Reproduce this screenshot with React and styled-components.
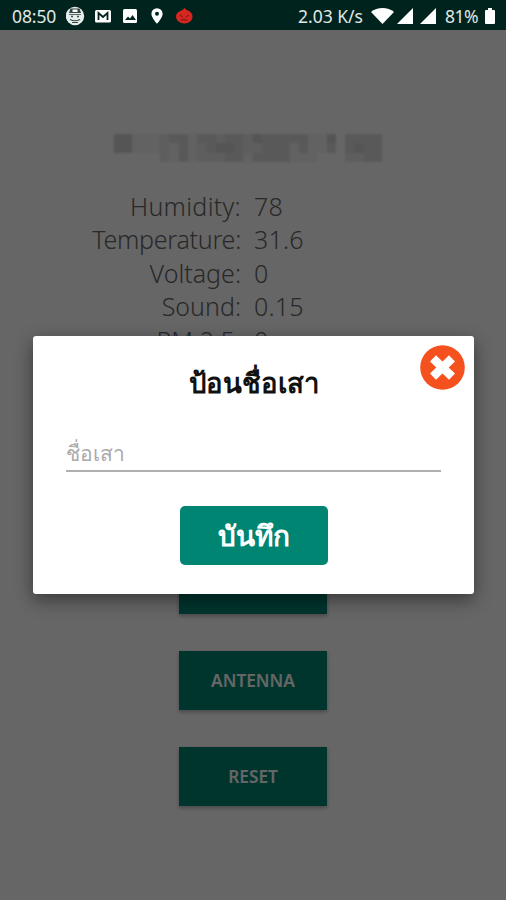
import React from "react";
import styled, { createGlobalStyle } from "styled-components";

const readings = [
  { label: "Humidity:", value: "78", spacing: 0.3 },
  { label: "Temperature:", value: "31.6", spacing: -0.25 },
  { label: "Voltage:", value: "0", spacing: 0 },
  { label: "Sound:", value: "0.15", spacing: 0 },
  { label: "PM 2.5:", value: "0", spacing: 0.1 },
];

// darkness of every tile of the censored title, row by row
const mosaic = [
  "44111233133233243333311403333",
  "44111213123443223331311303433",
  "00000213122233133331110002233",
];

export default function App() {
  return (
    <Screen>
      <GlobalStyle />
      <StatusBar>
        <Clock>08:50</Clock>
        <NotificationIcons />
        <Speed>2.03 K/s</Speed>
        <SignalIcons />
        <Percent>81%</Percent>
        <BatteryIcon />
      </StatusBar>

      <Page>
        <Mosaic>
          {mosaic.join("").split("").map((level, i) => (
            <Tile key={i} $level={Number(level)} />
          ))}
        </Mosaic>
        <Readings>
          {readings.map((el) => (
            <Reading key={el.label}>
              <Label $spacing={el.spacing}>{el.label}</Label>
              <Value>{el.value}</Value>
            </Reading>
          ))}
        </Readings>
        <Actions>
          <PageButton />
          <PageButton>ANTENNA</PageButton>
          <PageButton>RESET</PageButton>
        </Actions>
      </Page>

      <Overlay>
        <Modal>
          <CloseButton aria-label="close">
            <svg width="45" height="45" viewBox="0 0 45 45">
              <circle cx="22.5" cy="22.5" r="22.3" fill="#f4511e" />
              <path
                d="M13 13.300 32 31.700M32 13.300 13 31.700"
                stroke="#fff"
                strokeWidth="8.600"
              />
            </svg>
          </CloseButton>
          <Title>ป้อนชื่อเสา</Title>
          <NameInput placeholder="ชื่อเสา" />
          <SaveButton>บันทึก</SaveButton>
        </Modal>
      </Overlay>
    </Screen>
  );
}

function NotificationIcons() {
  return (
    <Notifications width="130" height="20" viewBox="0 0 130 20">
      <circle cx="9" cy="10" r="9.2" fill="#e6eeec" />
      <path d="M4.500 2.500h9L15 7H3z" fill="#33453f" />
      <path d="M6.500 3.500h5V6h-5z" fill="#fff" />
      <path d="M3 8.500h12" stroke="#5d6b67" strokeWidth="1" />
      <circle cx="6" cy="10.500" r="1" fill="#33453f" />
      <circle cx="12" cy="10.500" r="1" fill="#33453f" />
      <path d="M4 13.500q5 2.500 10 0M6 16.500h6" fill="none" stroke="#33453f" strokeWidth="1.2" />
      <rect x="29" y="4" width="16" height="12.5" rx="1.5" fill="#fff" />
      <path d="M32.500 14V7l4.500 4 4.500-4v7" fill="none" stroke="#01241e" strokeWidth="1.8" />
      <rect x="57" y="3" width="14" height="14" rx="1.5" fill="#fff" />
      <path d="m59 14 3-3.500 2 2 2.500-3.500 3.500 5z" fill="#01241e" />
      <path
        d="M91 2.200a5.600 5.600 0 0 0-5.600 5.600c0 4.200 5.600 10 5.600 10s5.600-5.800 5.600-10A5.600 5.600 0 0 0 91 2.200z"
        fill="#fff"
      />
      <circle cx="91" cy="7.800" r="2" fill="#01241e" />
      <path
        d="M118.500 1.500c.5 2 2.500 2.500 4.500 3.500 2 1.200 3.500 3 3.500 5.500 0 4-3.500 7-8 7s-8.500-3-8.500-7c0-2.500 1.500-4 3.500-5 2-1.200 4-1.500 5-4z"
        fill="#d5261f"
      />
      <path
        d="m114 9 2.500 2m6-2-2.500 2M115 14.500q3-2 6.500 0"
        fill="none"
        stroke="#8b1a16"
        strokeWidth="1.3"
      />
    </Notifications>
  );
}

function SignalIcons() {
  return (
    <Signals width="66" height="18" viewBox="0 0 66 18">
      <path d="M0 5C6-.3 17-.3 23 5L11.500 17z" fill="#fff" />
      <path d="M42 1v16H26zM65 1v16H49z" fill="#fff" />
    </Signals>
  );
}

function BatteryIcon() {
  return (
    <svg width="10" height="16" viewBox="0 0 10 16">
      <path d="M3 0h4v2h2q1 0 1 1v12q0 1-1 1H1q-1 0-1-1V3q0-1 1-1h2z" fill="#fff" />
    </svg>
  );
}

const GlobalStyle = createGlobalStyle`
  * {
    box-sizing: border-box;
  }
  body {
    margin: 0;
    background: #656565;
  }
`;

const Screen = styled.div`
  position: relative;
  width: 506px;
  height: 900px;
  overflow: hidden;
  background: #fff;
  font-family: "Noto Sans", sans-serif;
`;

const StatusBar = styled.header`
  position: relative;
  z-index: 2;
  display: flex;
  align-items: center;
  height: 30px;
  padding: 2px 11px 0 12px;
  background: #00231d;
  color: #e1e8e6;
  font-size: 17.5px;
  line-height: 28px;
  white-space: nowrap;
`;

const Clock = styled.span`
  width: 54px;
  letter-spacing: -0.1px;
`;

const Notifications = styled.svg`
  flex: none;
`;

const Speed = styled.span`
  width: 65px;
  margin-left: auto;
`;

const Signals = styled.svg`
  flex: none;
  margin: 0 8px;
`;

const Percent = styled.span`
  width: 40px;
  letter-spacing: -0.5px;
`;

const Page = styled.main`
  display: flex;
  flex-direction: column;
  align-items: center;
  padding-top: 104px;
`;

const Mosaic = styled.div`
  display: grid;
  grid-template-columns: repeat(29, 1fr);
  width: 268px;
  height: 28px;
  margin-right: 10px;
  filter: blur(1px);
`;

const Tile = styled.i`
  background: rgba(60, 60, 60, ${(props) => props.$level * 0.055});
`;

const Readings = styled.div`
  width: 100%;
  margin-top: 28px;
  color: #666;
  font-size: 25px;
  font-weight: 300;
`;

const Reading = styled.div`
  display: grid;
  grid-template-columns: 241px 1fr;
  column-gap: 13px;
  height: 33.4px;
  line-height: 32px;
`;

const Label = styled.span`
  letter-spacing: ${(props) => props.$spacing}px;
  text-align: right;
`;

const Value = styled.span`
  letter-spacing: 0.2px;
`;

const Actions = styled.div`
  display: flex;
  flex-direction: column;
  gap: 37px;
  margin-top: 198px;
`;

const PageButton = styled.button`
  width: 148px;
  height: 59px;
  border: 0;
  background: #008573;
  color: #fff;
  font: 600 17.3px "Noto Sans", sans-serif;
  box-shadow: 0 2px 4px rgba(0, 0, 0, 0.3);
`;

const Overlay = styled.div`
  position: absolute;
  inset: 0;
  z-index: 1;
  display: flex;
  justify-content: center;
  align-items: flex-start;
  padding: 336px 0 0 1px;
  background: rgba(0, 0, 0, 0.6);
`;

const Modal = styled.section`
  position: relative;
  display: flex;
  flex-direction: column;
  align-items: center;
  width: 441px;
  height: 258px;
  padding-top: 28px;
  border-radius: 3px;
  background: #fff;
  box-shadow: 0 6px 18px rgba(0, 0, 0, 0.45);
`;

const CloseButton = styled.button`
  position: absolute;
  top: 9px;
  right: 9px;
  width: 45px;
  height: 45px;
  padding: 0;
  border: 0;
  background: none;
`;

const Title = styled.h2`
  margin: 0;
  height: 40px;
  color: #111;
  font-size: 27.5px;
  font-weight: 700;
  line-height: 38px;
`;

const NameInput = styled.input`
  width: 375px;
  height: 36px;
  margin-top: 32px;
  padding: 0;
  border: 0;
  border-bottom: 2px solid #b0b0b0;
  background: none;
  font: 400 21px "Noto Sans", sans-serif;
  &::placeholder {
    color: #aaa;
  }
`;

const SaveButton = styled.button`
  width: 148px;
  height: 59px;
  margin-top: 34px;
  border: 0;
  border-radius: 5px;
  background: #008573;
  color: #fff;
  font: 700 28px "Noto Sans", sans-serif;
`;
